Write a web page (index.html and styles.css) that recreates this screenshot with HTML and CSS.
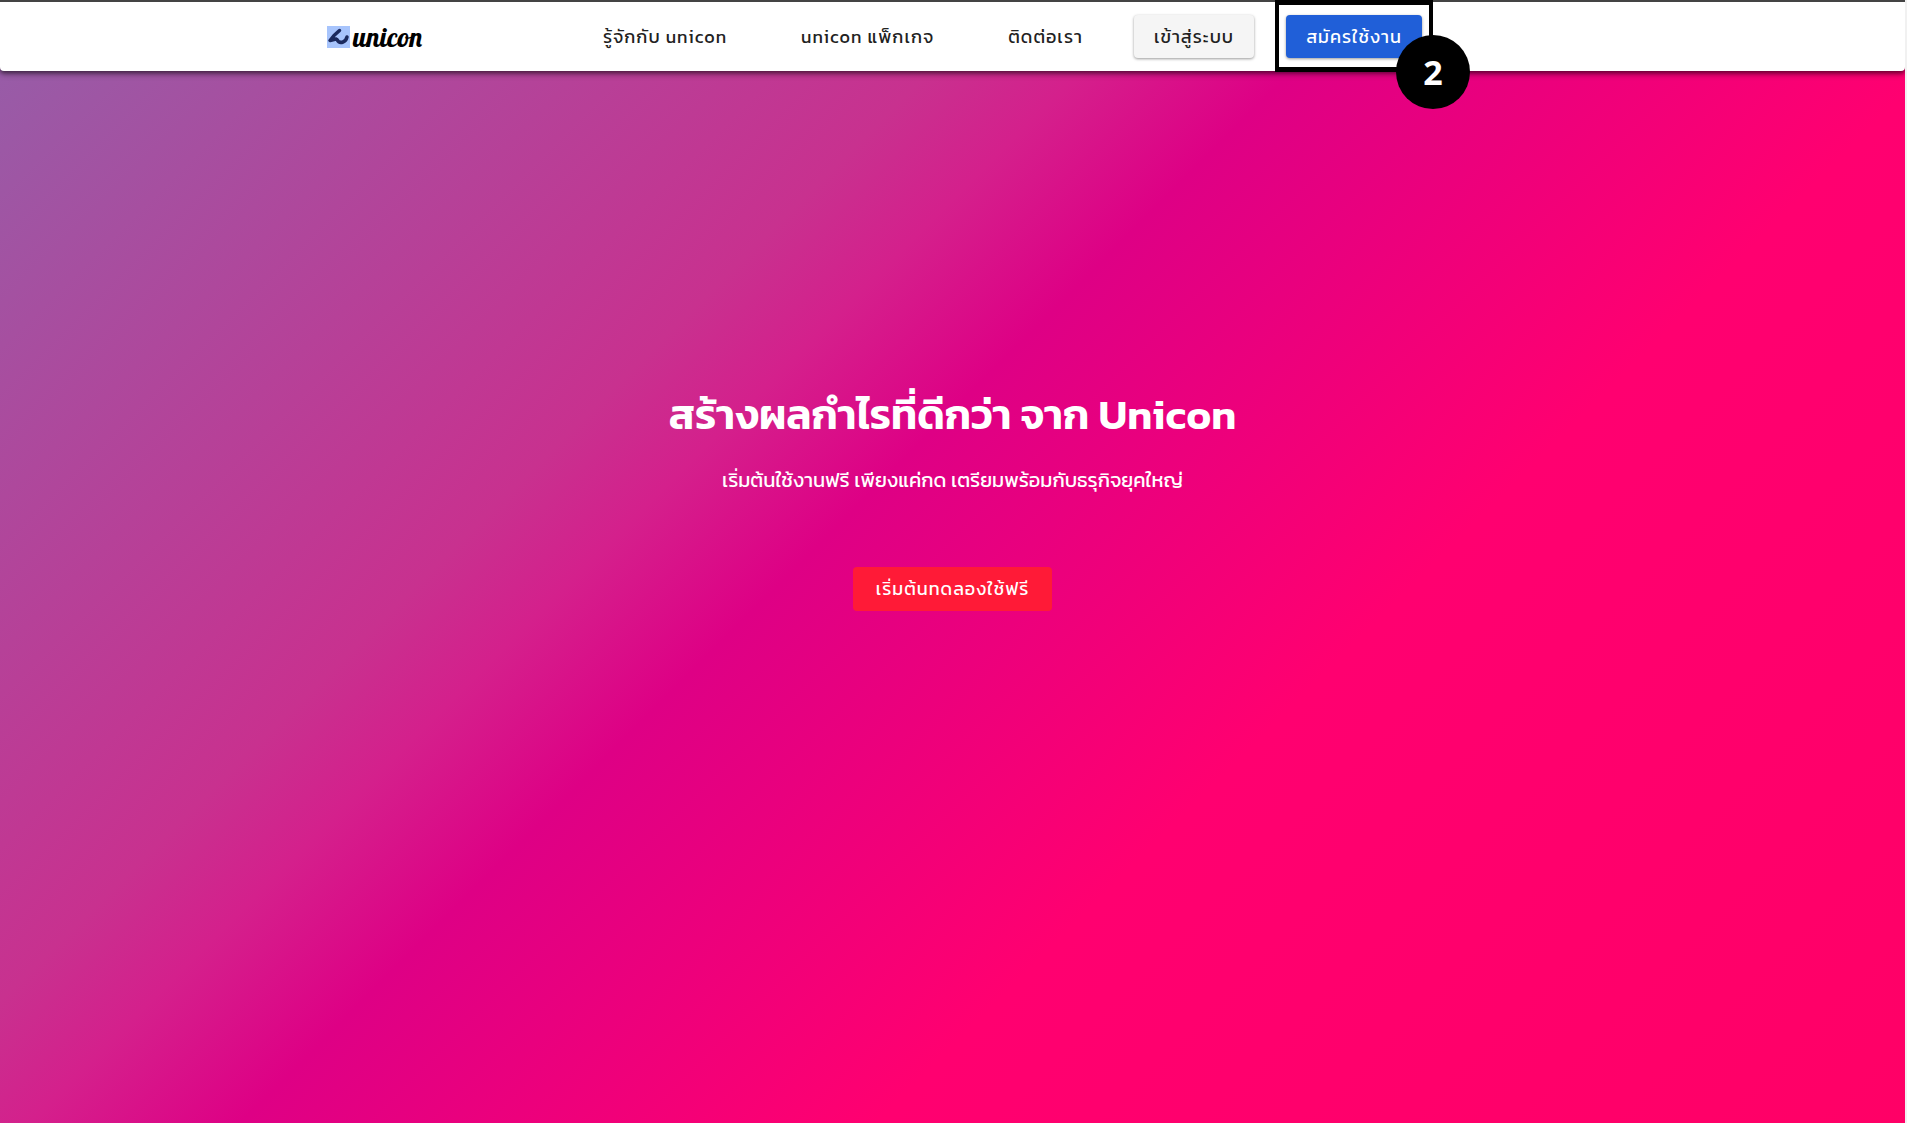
FILE: index.html
```html
<!DOCTYPE html>
<html lang="th">
<head>
<meta charset="utf-8">
<title>Unicon</title>
<meta name="viewport" content="width=device-width, initial-scale=1">
<link rel="stylesheet" href="styles.css">
</head>
<body>
<header class="bar">
  <div class="bar-inner">
    <a class="logo" href="#" aria-label="unicon">
      <svg class="logo-mark" viewBox="0 0 23 22" aria-hidden="true">
        <rect width="23" height="22" fill="#a7c4fc"/>
        <path d="M12.500 4.500 7 9.500 3 14.500l6-1.500M10 13.500q2 4 6 2.500 3-1 4-5" fill="none" stroke="#1b2a5e" stroke-width="3.500" stroke-linecap="round" stroke-linejoin="round"/>
      </svg>
      <span class="logo-text">unicon</span>
    </a>
    <nav class="menu">
      <a class="menu-link" href="#">รู้จักกับ unicon</a>
      <a class="menu-link" href="#">unicon แพ็กเกจ</a>
      <a class="menu-link" href="#">ติดต่อเรา</a>
    </nav>
    <button class="btn btn-login" type="button">เข้าสู่ระบบ</button>
    <div class="callout">
      <button class="btn btn-signup" type="button">สมัครใช้งาน</button>
      <span class="callout-number">2</span>
    </div>
  </div>
</header>
<main class="hero">
  <h1 class="hero-title">สร้างผลกำไรที่ดีกว่า จาก Unicon</h1>
  <p class="hero-text">เริ่มต้นใช้งานฟรี เพียงแค่กด เตรียมพร้อมกับธรุกิจยุคใหญ่</p>
  <button class="btn btn-trial" type="button">เริ่มต้นทดลองใช้ฟรี</button>
</main>
</body>
</html>
```

FILE: styles.css
```css
* { box-sizing: border-box; }
body {
  margin: 0;
  min-height: 100vh;
  display: flex;
  flex-direction: column;
  border-right: 2px solid #f1f1f1;
  font-family: Kanit, "Noto Sans Thai", "Noto Sans", sans-serif;
  font-size: 18px;
  background: linear-gradient(135deg, #945fa9 0%, #c8318f 33%, #d4208c 38%, #de0085 45%, #ff0070 66%, #ff0066 100%);
}
.bar {
  position: relative;
  background: #fff;
  border-top: 2px solid #444;
  border-radius: 0 0 4px 4px;
  box-shadow: 0 2px 4px rgba(0,0,0,.5), 0 4px 6px rgba(0,0,0,.2);
}
.bar-inner {
  display: flex;
  align-items: center;
  max-width: 1433px;
  height: 69px;
  padding-left: 327px;
}
.logo {
  display: flex;
  align-items: center;
  gap: 3px;
  color: #000;
  text-decoration: none;
}
.logo-mark { width: 23px; height: 22px; }
.logo-text { width: 71px; font: 27px/28px Lobster, "Liberation Serif", serif; }
.menu { display: flex; gap: 74px; margin-left: 179px; }
.menu-link {
  color: #222;
  text-decoration: none;
  line-height: 24px;
  letter-spacing: 1px;
  white-space: nowrap;
}
.btn {
  padding: 0;
  border: 0;
  border-radius: 4px;
  font: inherit;
  line-height: 24px;
  letter-spacing: 1px;
  white-space: nowrap;
}
.btn-login {
  width: 120px;
  height: 43px;
  margin-left: auto;
  color: #222;
  background: #f5f5f5;
  box-shadow: 0 1px 3px rgba(0,0,0,.4);
}
.btn-signup {
  display: block;
  width: 136px;
  height: 43px;
  color: #fff;
  background: #205fd8;
  box-shadow: 0 1px 3px rgba(0,0,0,.4);
}
.callout {
  position: relative;
  align-self: flex-start;
  margin: -2px 0 0 21px;
  padding: 10px 7px 9px;
  border: solid #000;
  border-width: 5px 4px;
}
.callout-number {
  position: absolute;
  right: -41px;
  bottom: -42px;
  width: 74px;
  height: 74px;
  border-radius: 50%;
  background: #000;
  color: #fff;
  font: bold 34px/74px "Open Sans", sans-serif;
  text-align: center;
}
.hero {
  flex: 1;
  display: flex;
  flex-direction: column;
  align-items: center;
  padding: 312px 24px 0;
  color: #fff;
}
.hero-title { margin: 0; font-size: 42px; line-height: 64px; font-weight: 600; }
.hero-text { margin: 17px 0 71px; font-size: 20px; line-height: 32px; }
.btn-trial { width: 199px; height: 44px; color: #fff; background: #ff1a37; }
```
